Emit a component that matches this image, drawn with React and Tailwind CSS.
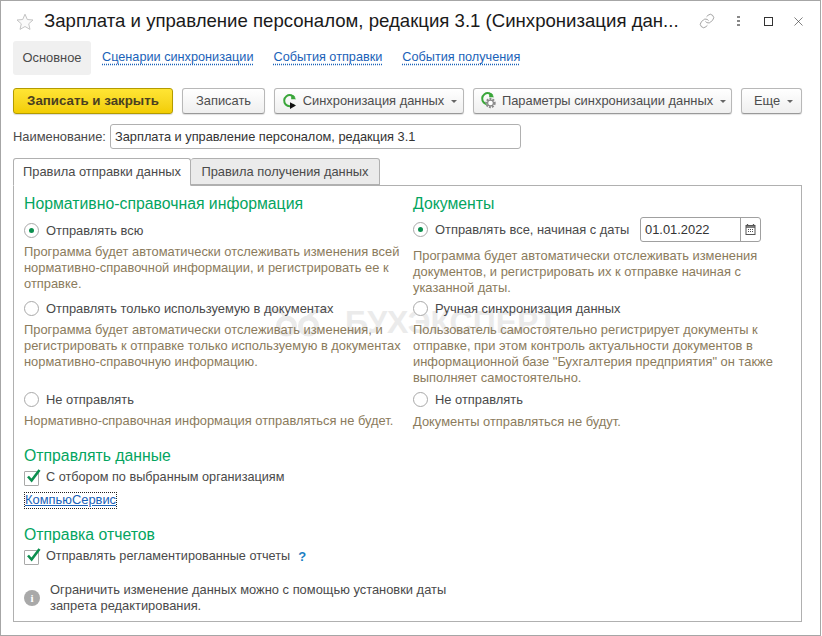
import { Link, X } from 'lucide-react';

const Caret = () => <span className="ml-[7px] w-0 h-0 border-x-[3px] border-x-transparent border-t-[3px] border-t-[#666] mt-px" />;

const ToolButton = ({ className, children }) => (
  <button className={`h-[26px] flex items-center justify-center rounded-[3px] border border-[#b8b8b8] border-b-[#999] bg-gradient-to-b from-white to-[#efefef] shadow-[0_1px_1px_rgba(0,0,0,0.12)] text-[#4d4d4d] ${className}`}>
    {children}
  </button>
);

const SyncArrow = () => (
  <>
    <path d="M13.6 4.8A5.6 5.6 0 1 0 13 11.4" fill="none" stroke="#3aa63a" strokeWidth="2" />
    <path d="M10.2 1.2v5h5z" fill="#3aa63a" />
  </>
);

const SyncIcon = () => (
  <svg width="17" height="17" viewBox="0 0 17 17" className="shrink-0">
    <SyncArrow />
    <path d="M9 9.2l6 3.400-6 3.400z" fill="#111" />
  </svg>
);

const SyncGearIcon = () => (
  <svg width="18" height="18" viewBox="0 0 18 18" className="shrink-0 -mt-[3px]">
    <SyncArrow />
    <circle cx="11.500" cy="12" r="4" fill="#fff" stroke="#8a8a8a" strokeWidth="2.400" strokeDasharray="1.800 1.100" />
    <circle cx="11.500" cy="12" r="2.900" fill="none" stroke="#8a8a8a" strokeWidth="1.200" />
  </svg>
);

const Radio = ({ checked }) => (
  <span className="w-[15px] h-[15px] shrink-0 rounded-full border border-[#a9a9a9] bg-white flex items-center justify-center">
    {checked && <span className="w-[5px] h-[5px] rounded-full bg-[#0c8f4f]" />}
  </span>
);

const RadioRow = ({ checked, children, className = '' }) => (
  <div className={`flex items-center gap-[7px] text-[#4a4a4a] ${className}`}>
    <Radio checked={checked} />
    <span>{children}</span>
  </div>
);

const Hint = ({ children, className = '' }) => (
  <p className={`text-[#8b7b5c] leading-4 ${className}`}>{children}</p>
);

const Heading = ({ children, className = '' }) => (
  <h2 className={`text-[15.800px] leading-[18px] text-[#04a55f] font-normal ${className}`}>{children}</h2>
);

const Check = ({ children }) => (
  <div className="flex items-center gap-[7px] h-4 text-[#4a4a4a] text-[12.700px]">
    <span className="relative w-[15px] h-[15px] shrink-0 border border-[#a9a9a9] bg-white rounded-[1px]">
      <svg width="17" height="16" viewBox="0 0 17 16" className="absolute left-0 -top-[4px]">
        <path d="M3 8.500l3.600 4L14.500 2" fill="none" stroke="#0c8f4f" strokeWidth="2.600" />
      </svg>
    </span>
    {children}
  </div>
);

const NavLink = ({ children, className = '' }) => (
  <a className={`text-[#1a62b8] text-[12.700px] underline decoration-dotted underline-offset-2 ${className}`}>{children}</a>
);

export default function App() {
  return (
    <div className="relative w-[822px] h-[636px] bg-white text-[12.900px] overflow-hidden font-['Liberation_Sans',Arial,sans-serif]">
      {/* Watermark */}
      <div className="absolute left-[262px] top-[298px] flex items-center gap-3 text-[#ebebeb] pointer-events-none font-bold text-[32px] whitespace-nowrap">
        <svg width="71" height="30" viewBox="0 0 64 30">
          <path d="M2 2l14 3 8 8M62 2l-14 3-8 8" fill="none" stroke="currentColor" strokeWidth="4" />
          <circle cx="21" cy="19" r="8" fill="none" stroke="currentColor" strokeWidth="5" />
          <circle cx="43" cy="19" r="8" fill="none" stroke="currentColor" strokeWidth="5" />
        </svg>
        БУХЭКСПЕРТ
      </div>

      <div className="relative w-[821px] h-[636px] border border-[#a6a6a6] px-3">
        {/* Header */}
        <div className="flex items-center h-10 -mr-[3px]">
          <svg width="18" height="17" viewBox="0 0 18 17" className="ml-[3px] shrink-0">
            <path d="M9 1.200l2.300 5.300 5.700.5-4.300 3.800 1.300 5.600L9 13.500l-5 2.900 1.300-5.600L1 7l5.700-.5z" fill="#fafafa" stroke="#c4c4c4" />
          </svg>
          <h1 className="ml-[10px] w-[640px] text-[18.600px] leading-6 font-normal text-[#1a1a1a] whitespace-nowrap">
            Зарплата и управление персоналом, редакция 3.1 (Синхронизация дан...
          </h1>
          <Link size={16} strokeWidth={1} className="ml-[15px] text-[#777]" />
          <span className="ml-[22px] flex flex-col gap-[1.500px]">
            <span className="w-[3px] h-[2.500px] bg-[#888]" />
            <span className="w-[3px] h-[2.500px] bg-[#888]" />
            <span className="w-[3px] h-[2.500px] bg-[#888]" />
          </span>
          <span className="ml-[24px] w-[9px] h-[9px] border border-[#333]" />
          <X size={15} strokeWidth={1} className="ml-[18px] text-[#333]" />
        </div>

        {/* Form navigation */}
        <div className="flex items-center h-[34px]">
          <span className="w-[78px] h-[34px] flex items-center justify-center rounded-[3px] bg-[#f0f0f0] text-[#4a4a4a]">Основное</span>
          <NavLink className="ml-[11px]">Сценарии синхронизации</NavLink>
          <NavLink className="ml-5">События отправки</NavLink>
          <NavLink className="ml-5">События получения</NavLink>
        </div>

        {/* Command bar */}
        <div className="flex mt-[13px] gap-[9px]">
          <button className="w-40 h-[26px] rounded-[3px] border border-[#b39b00] bg-gradient-to-b from-[#ffe533] to-[#f2cd00] font-bold text-[13.300px] text-[#4a4020] shadow-[0_1px_1px_rgba(0,0,0,0.15)]">
            Записать и закрыть
          </button>
          <ToolButton className="w-[83px]">Записать</ToolButton>
          <ToolButton className="w-[190px]">
            <SyncIcon />
            <span className="ml-[5px]">Синхронизация данных</span>
            <Caret />
          </ToolButton>
          <ToolButton className="w-[259px]">
            <SyncGearIcon />
            <span className="ml-[5px]">Параметры синхронизации данных</span>
            <Caret />
          </ToolButton>
          <ToolButton className="w-[61px]">
            <span className="ml-1">Еще</span>
            <Caret />
          </ToolButton>
        </div>

        {/* Name */}
        <div className="flex items-center mt-[10px] h-[25px]">
          <label className="w-[97px] text-[#4a4a4a]">Наименование:</label>
          <input
            readOnly
            value="Зарплата и управление персоналом, редакция 3.1"
            className="w-[411px] h-[25px] px-1 rounded-[3px] border border-[#b0b0b0] text-[#333] text-[12.800px] outline-none"
          />
        </div>

        {/* Tabs */}
        <div className="flex mt-[9px] h-7 relative z-10">
          <div className="w-[178px] h-7 flex items-center justify-center rounded-t-[3px] border border-[#b0b0b0] border-b-white bg-white text-[#4a4a4a]">Правила отправки данных</div>
          <div className="w-[189px] h-[27px] flex items-center justify-center rounded-t-[3px] border border-l-0 border-[#b0b0b0] bg-[#ebebeb] text-[#4a4a4a]">Правила получения данных</div>
        </div>

        {/* Panel */}
        <div className="-mt-px w-[789px] h-[437px] border border-[#b0b0b0] pl-[10px] pt-[9px]">
          <div className="flex">
            <div className="w-[389px] pr-[6px]">
              <Heading>Нормативно-справочная информация</Heading>
              <RadioRow checked className="mt-[10px] h-[15px]">Отправлять всю</RadioRow>
              <Hint className="mt-[6px]">Программа будет автоматически отслеживать изменения всей нормативно-справочной информации, и регистрировать ее к отправке.</Hint>
              <RadioRow className="mt-[9px] h-[15px]">Отправлять только используемую в документах</RadioRow>
              <Hint className="mt-[6px]">Программа будет автоматически отслеживать изменения, и регистрировать к отправке только используемую в документах нормативно-справочную информацию.</Hint>
              <RadioRow className="mt-[22px] h-[15px]">Не отправлять</RadioRow>
              <Hint className="mt-[6px]">Нормативно-справочная информация отправляться не будет.</Hint>
            </div>
            <div className="w-[370px]">
              <Heading>Документы</Heading>
              <div className="flex items-center mt-[4px] h-[25px]">
                <RadioRow checked className="w-[227px]">Отправлять все, начиная с даты</RadioRow>
                <div className="flex w-[121px] h-[25px] rounded-[3px] border border-[#a0a0a0] text-[#333]">
                  <span className="w-[100px] flex items-center pl-1 border-r border-[#a0a0a0]">01.01.2022</span>
                  <span className="flex-1 flex items-center justify-center">
                    <svg width="11" height="11" viewBox="0 0 11 11">
                      <path d="M2.500 0v2M8.500 0v2" stroke="#555" strokeWidth="1.300" />
                      <rect x="1" y="1.500" width="9" height="9" fill="none" stroke="#555" />
                      <path d="M1 3h9" stroke="#555" strokeWidth="1.500" />
                      <path d="M3 5.500h5M3 7.500h5" stroke="#555" strokeDasharray="1 1" />
                    </svg>
                  </span>
                </div>
              </div>
              <Hint className="mt-[6px]">Программа будет автоматически отслеживать изменения документов, и регистрировать их к отправке начиная с указанной даты.</Hint>
              <RadioRow className="mt-[5px] h-[15px]">Ручная синхронизация данных</RadioRow>
              <Hint className="mt-[6px]">Пользователь самостоятельно регистрирует документы к отправке, при этом контроль актуальности документов в информационной базе "Бухгалтерия предприятия" он также выполняет самостоятельно.</Hint>
              <RadioRow className="mt-[6px] h-[15px]">Не отправлять</RadioRow>
              <Hint className="mt-[7px]">Документы отправляться не будут.</Hint>
            </div>
          </div>

          <Heading className="mt-[17px]">Отправлять данные</Heading>
          <div className="mt-[5px]"><Check>С отбором по выбранным организациям</Check></div>
          <div className="mt-[4px] h-[17px]">
            <a className="inline-block h-[17px] leading-[15px] outline-1 outline-dotted outline-[#222] -outline-offset-1 px-px text-[#1a62b8] underline">КомпьюСервис</a>
          </div>
          <Heading className="mt-[19px]">Отправка отчетов</Heading>
          <div className="mt-[5px]">
            <Check>
              Отправлять регламентированные отчеты
              <span className="ml-[1px] font-bold text-[#1a7fc4] text-[13px]">?</span>
            </Check>
          </div>
          <div className="flex items-center mt-[17px]">
            <span className="w-4 h-4 rounded-full bg-[#a9a9a9] text-white font-bold flex items-center justify-center text-[11px] font-['Liberation_Serif',serif]">i</span>
            <p className="ml-[10px] w-[410px] leading-4 text-[#4a4a4a]">Ограничить изменение данных можно с помощью установки даты запрета редактирования.</p>
          </div>
        </div>
      </div>
    </div>
  );
}
